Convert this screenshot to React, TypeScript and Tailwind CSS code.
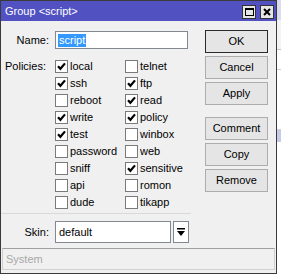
import React from "react";

const left = [
  ["local", true],
  ["ssh", true],
  ["reboot", false],
  ["write", true],
  ["test", true],
  ["password", false],
  ["sniff", false],
  ["api", false],
  ["dude", false],
] as const;
const right = [
  ["telnet", false],
  ["ftp", true],
  ["read", true],
  ["policy", true],
  ["winbox", false],
  ["web", false],
  ["sensitive", true],
  ["romon", false],
  ["tikapp", false],
] as const;

function Check({ on }: { on: boolean }) {
  return (
    <span className="w-[13px] h-[13px] border border-[#7a7a7a] bg-white flex items-center justify-center shrink-0">
      {on && (
        <svg width="9" height="9" viewBox="0 0 9 9">
          <path d="M1 4.2 L3.4 6.8 L8 1.4" stroke="#000" strokeWidth="2.2" fill="none" />
        </svg>
      )}
    </span>
  );
}

function Row({ label, on }: { label: string; on: boolean }) {
  return (
    <div className="h-[17px] flex items-center gap-[2px] w-[70px]">
      <Check on={on} />
      <span className="leading-none">{label}</span>
    </div>
  );
}

function Btn({ children, def }: { children: React.ReactNode; def?: boolean }) {
  return (
    <div
      className={`h-[23px] w-[63px] flex items-center justify-center bg-[#e5e5e5] border ${
        def ? "border-[#2a2a2a]" : "border-[#adadad]"
      }`}
    >
      {children}
    </div>
  );
}

export default function App() {
  return (
    <div
      className="w-[281px] h-[274px] flex bg-[#e9e9e9] text-[11px] text-black overflow-hidden"
      style={{ fontFamily: '"Liberation Sans", Arial, sans-serif' }}
    >
      <div className="w-[277px] h-[274px] shrink-0 border border-[#3a3a3a] bg-[#f0f0f0] flex flex-col">
        <div className="h-[20px] bg-[#5151c1] flex items-center pl-[4px] pr-[2px]">
          <span className="text-white text-[11px] leading-none">Group &lt;script&gt;</span>
          <div className="ml-auto flex gap-[4px] items-center pt-[1px]">
            <div className="w-[14px] h-[14px] bg-[#e6e6e6] border border-[#333] flex items-center justify-center">
              <div className="w-[9px] h-[8px] border border-black border-t-2" />
            </div>
            <div className="w-[14px] h-[14px] bg-[#e6e6e6] border border-[#333] flex items-center justify-center">
              <svg width="8" height="8" viewBox="0 0 8 8">
                <path d="M1 1 L7 7 M7 1 L1 7" stroke="#000" strokeWidth="2" />
              </svg>
            </div>
          </div>
        </div>
        <div className="flex flex-1">
          <div className="w-[204px] flex flex-col">
            <div className="flex items-center mt-[10px] h-[18px]">
              <span className="w-[49px] text-right pr-[1px]">Name:</span>
              <div className="ml-[5px] w-[133px] h-[18px] bg-white border border-[#828790] flex items-center pl-[2px]">
                <span className="bg-[#3399ff] text-white px-[1px] leading-[13px]">script</span>
              </div>
            </div>
            <div className="flex mt-[9px]">
              <div className="w-[54px] h-[17px] flex items-center justify-end pr-[9px]">Policies:</div>
              <div className="flex flex-col">
                {left.map(([l, o]) => (
                  <Row key={l} label={l} on={o} />
                ))}
              </div>
              <div className="flex flex-col">
                {right.map(([l, o]) => (
                  <Row key={l} label={l} on={o} />
                ))}
              </div>
            </div>
            <div className="mt-[2px] h-px bg-[#d9d9d9] w-[190px]" />
            <div className="flex items-center mt-[7px] h-[22px]">
              <span className="w-[49px] text-right pr-[1px]">Skin:</span>
              <div className="ml-[5px] w-[116px] h-[22px] bg-white border border-[#828790] flex items-center pl-[3px]">
                default
              </div>
              <div className="ml-[2px] w-[16px] h-[22px] bg-white border border-[#828790] flex items-center justify-center">
                <svg width="8" height="9" viewBox="0 0 8 9">
                  <rect x="0" y="0" width="8" height="1.5" fill="#000" />
                  <path d="M0 3 L8 3 L4 8 Z" fill="#000" />
                </svg>
              </div>
            </div>
          </div>
          <div className="flex flex-col pt-[9px] gap-[3px]">
            <Btn def>OK</Btn>
            <Btn>Cancel</Btn>
            <Btn>Apply</Btn>
            <div className="h-[6px]" />
            <Btn>Comment</Btn>
            <Btn>Copy</Btn>
            <Btn>Remove</Btn>
          </div>
        </div>
        <div className="mx-[1px] mb-[3px] h-[22px] border border-[#d0d0d0] border-t-[#a0a0a0] flex items-center pl-[3px] text-[#a8a8a8]">
          System
        </div>
      </div>
      <div className="flex-1 flex flex-col bg-white">
        <div className="h-[20px] bg-[#dcdcf0]" />
        <div className="h-[30px] border-b border-[#c8c8c8] bg-[#f3f3f3]" />
        <div className="h-[20px] border-b border-[#d0d0d0]" />
        <div className="h-[60px] border-b border-[#d0d0d0]" />
        <div className="h-[12px] bg-[#c5cbe8]" />
        <div className="flex-1" />
      </div>
    </div>
  );
}
